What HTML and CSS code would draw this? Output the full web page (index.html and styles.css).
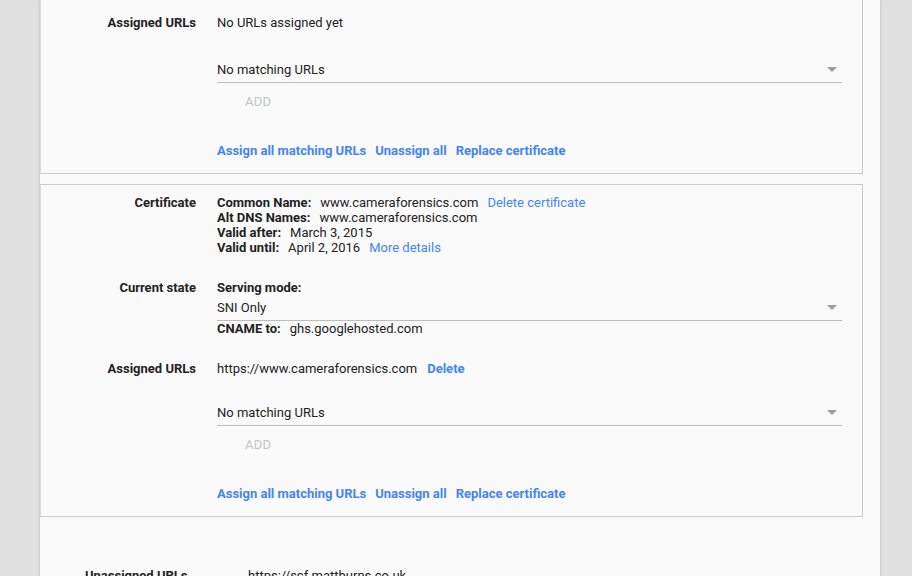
FILE: index.html
```html
<!DOCTYPE html>
<html>
<head>
<meta charset="utf-8">
<link rel="stylesheet" href="styles.css">
</head>
<body>
<div class="panel">
  <section class="card card-first">
    <div class="row">
      <div class="label">Assigned URLs</div>
      <div class="value">
        <div class="line">No URLs assigned yet</div>
        <div class="select select-a"><span>No matching URLs</span><span class="arrow"></span></div>
        <div class="add">ADD</div>
        <div class="actions"><a>Assign all matching URLs</a><a>Unassign all</a><a>Replace certificate</a></div>
      </div>
    </div>
  </section>

  <section class="card card-second">
    <div class="row">
      <div class="label">Certificate</div>
      <div class="value">
        <div class="line"><b>Common Name:</b><span class="v">www.cameraforensics.com</span><a class="thin">Delete certificate</a></div>
        <div class="line"><b>Alt DNS Names:</b><span class="v">www.cameraforensics.com</span></div>
        <div class="line"><b>Valid after:</b><span class="v">March 3, 2015</span></div>
        <div class="line"><b>Valid until:</b><span class="v">April 2, 2016</span><a class="thin">More details</a></div>
      </div>
    </div>
    <div class="row row-gap">
      <div class="label">Current state</div>
      <div class="value">
        <div class="line"><b>Serving mode:</b></div>
        <div class="select select-b"><span>SNI Only</span><span class="arrow"></span></div>
        <div class="line"><b>CNAME to:</b><span class="v">ghs.googlehosted.com</span></div>
      </div>
    </div>
    <div class="row row-gap">
      <div class="label">Assigned URLs</div>
      <div class="value">
        <div class="line"><span>https://www.cameraforensics.com</span><a class="bold">Delete</a></div>
        <div class="select select-c"><span>No matching URLs</span><span class="arrow"></span></div>
        <div class="add">ADD</div>
        <div class="actions"><a>Assign all matching URLs</a><a>Unassign all</a><a>Replace certificate</a></div>
      </div>
    </div>
  </section>

  <div class="unassigned">
    <div class="u-label">Unassigned URLs</div>
    <div class="u-value">https://scf.mattburns.co.uk</div>
  </div>
</div>
</body>
</html>
```

FILE: styles.css
```css
html, body {
  margin: 0;
  padding: 0;
  height: 100%;
  overflow: hidden;
}
body {
  background: #e0e0e0;
  font-family: Roboto, "Liberation Sans", Arial, sans-serif;
  font-size: 13px;
  line-height: 15px;
  color: #222222;
}
.panel {
  margin-left: 40px;
  width: 840px;
  min-height: 600px;
  background: #fafafa;
  box-shadow: 0 0 3px rgba(0,0,0,0.18);
}
.card {
  border: 1px solid #cbcbcb;
  border-left-color: #dddddd;
  box-sizing: border-box;
  width: 823px;
  padding-bottom: 15px;
}
.card-first {
  border-top: 0;
  padding-top: 15px;
}
.card-second {
  margin-top: 10px;
  padding-top: 10px;
}
.row {
  display: grid;
  grid-template-columns: 155px 625px;
  column-gap: 21px;
}
.row-gap {
  margin-top: 25px;
}
.label {
  text-align: right;
  font-weight: 700;
  color: #222222;
}
.line {
  display: flex;
  align-items: baseline;
  white-space: nowrap;
}
.line b {
  font-weight: 700;
}
.v {
  margin-left: 9px;
}
a {
  color: #4285f4;
  cursor: pointer;
}
a.thin {
  margin-left: 9px;
  font-weight: 400;
}
a.bold {
  margin-left: 10px;
  font-weight: 700;
}
.select {
  display: flex;
  justify-content: space-between;
  align-items: center;
  padding-bottom: 5px;
  border-bottom: 1px solid #bdbdbd;
}
.select-a { margin-top: 32px; }
.select-b { margin-top: 5px; }
.select-c { margin-top: 29px; }
.arrow {
  width: 0;
  height: 0;
  border-left: 5px solid transparent;
  border-right: 5px solid transparent;
  border-top: 5px solid #9e9e9e;
  margin-right: 5px;
}
.add {
  margin-top: 11px;
  padding-left: 28px;
  color: #c4c4c4;
  font-weight: 400;
  letter-spacing: 0.3px;
}
.actions {
  margin-top: 34px;
  display: flex;
  gap: 9px;
}
.actions a {
  font-weight: 700;
}
.unassigned {
  display: flex;
  margin-top: 51px;
  padding-left: 45px;
}
.u-label {
  width: 163px;
  font-weight: 700;
}
.u-value {
  color: #222222;
}
```
